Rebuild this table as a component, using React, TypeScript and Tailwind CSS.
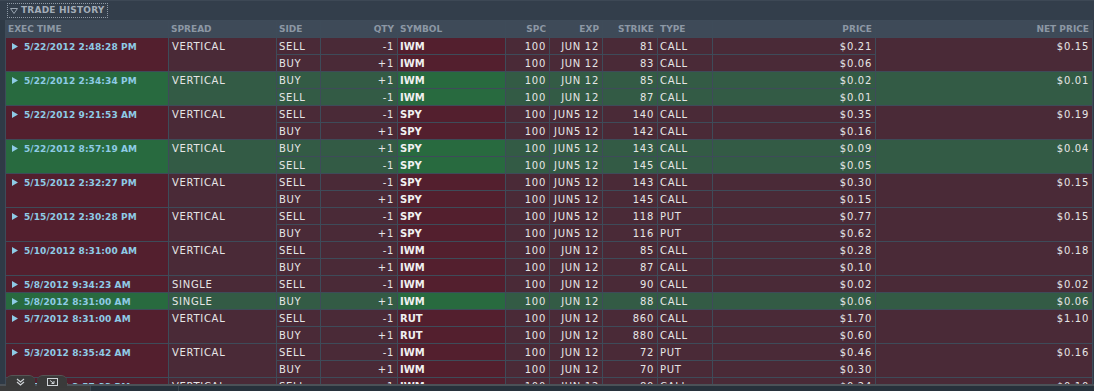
import React from "react";

type Leg = { side: string; qty: string; sym: string; spc: string; exp: string; strike: string; type: string; price: string };
type Group = { time: string; spread: string; c: "r" | "g"; net: string; legs: Leg[] };

const L = (side: string, sym: string, exp: string, strike: string, type: string, price: string): Leg => ({
  side,
  qty: side === "SELL" ? "-1" : "+1",
  sym,
  spc: "100",
  exp,
  strike,
  type,
  price,
});

const groups: Group[] = [
  { time: "5/22/2012 2:48:28 PM", spread: "VERTICAL", c: "r", net: "$0.15", legs: [L("SELL", "IWM", "JUN 12", "81", "CALL", "$0.21"), L("BUY", "IWM", "JUN 12", "83", "CALL", "$0.06")] },
  { time: "5/22/2012 2:34:34 PM", spread: "VERTICAL", c: "g", net: "$0.01", legs: [L("BUY", "IWM", "JUN 12", "85", "CALL", "$0.02"), L("SELL", "IWM", "JUN 12", "87", "CALL", "$0.01")] },
  { time: "5/22/2012 9:21:53 AM", spread: "VERTICAL", c: "r", net: "$0.19", legs: [L("SELL", "SPY", "JUN5 12", "140", "CALL", "$0.35"), L("BUY", "SPY", "JUN5 12", "142", "CALL", "$0.16")] },
  { time: "5/22/2012 8:57:19 AM", spread: "VERTICAL", c: "g", net: "$0.04", legs: [L("BUY", "SPY", "JUN5 12", "143", "CALL", "$0.09"), L("SELL", "SPY", "JUN5 12", "145", "CALL", "$0.05")] },
  { time: "5/15/2012 2:32:27 PM", spread: "VERTICAL", c: "r", net: "$0.15", legs: [L("SELL", "SPY", "JUN5 12", "143", "CALL", "$0.30"), L("BUY", "SPY", "JUN5 12", "145", "CALL", "$0.15")] },
  { time: "5/15/2012 2:30:28 PM", spread: "VERTICAL", c: "r", net: "$0.15", legs: [L("SELL", "SPY", "JUN5 12", "118", "PUT", "$0.77"), L("BUY", "SPY", "JUN5 12", "116", "PUT", "$0.62")] },
  { time: "5/10/2012 8:31:00 AM", spread: "VERTICAL", c: "r", net: "$0.18", legs: [L("SELL", "IWM", "JUN 12", "85", "CALL", "$0.28"), L("BUY", "IWM", "JUN 12", "87", "CALL", "$0.10")] },
  { time: "5/8/2012 9:34:23 AM", spread: "SINGLE", c: "r", net: "$0.02", legs: [L("SELL", "IWM", "JUN 12", "90", "CALL", "$0.02")] },
  { time: "5/8/2012 8:31:00 AM", spread: "SINGLE", c: "g", net: "$0.06", legs: [L("BUY", "IWM", "JUN 12", "88", "CALL", "$0.06")] },
  { time: "5/7/2012 8:31:00 AM", spread: "VERTICAL", c: "r", net: "$1.10", legs: [L("SELL", "RUT", "JUN 12", "860", "CALL", "$1.70"), L("BUY", "RUT", "JUN 12", "880", "CALL", "$0.60")] },
  { time: "5/3/2012 8:35:42 AM", spread: "VERTICAL", c: "r", net: "$0.16", legs: [L("SELL", "IWM", "JUN 12", "72", "PUT", "$0.46"), L("BUY", "IWM", "JUN 12", "70", "PUT", "$0.30")] },
  { time: "5/2/2012 2:57:33 PM", spread: "VERTICAL", c: "r", net: "$0.10", legs: [L("SELL", "IWM", "JUN 12", "80", "CALL", "$0.24"), L("BUY", "IWM", "JUN 12", "82", "CALL", "$0.14")] },
];

const FONT = "font-['DejaVu_Sans',Verdana,sans-serif]";
const TXT = `${FONT} text-[10px] tracking-[0.7px] text-[#e6e6e6] leading-[18px] h-4 whitespace-nowrap`;

const headers: { t: string; r?: boolean }[] = [
  { t: "EXEC TIME" },
  { t: "SPREAD" },
  { t: "SIDE" },
  { t: "QTY", r: true },
  { t: "SYMBOL" },
  { t: "SPC", r: true },
  { t: "EXP", r: true },
  { t: "STRIKE", r: true },
  { t: "TYPE" },
  { t: "PRICE", r: true },
  { t: "NET PRICE", r: true },
];

function Arrow() {
  return (
    <svg width="6" height="7" viewBox="0 0 6 7" className="shrink-0">
      <path d="M0 0 L6 3.5 L0 7 Z" fill="#8ecbe6" />
    </svg>
  );
}

export default function App() {
  const cells: React.ReactNode[] = [];
  groups.forEach((g, gi) => {
    const strong = g.c === "r" ? "bg-[#531f2e]" : "bg-[#286a3f]";
    const soft = g.c === "r" ? "bg-[#4a2a37]" : "bg-[#335b45]";
    const span = g.legs.length === 2 ? "row-span-2" : "";
    g.legs.forEach((l, li) => {
      if (li === 0) {
        cells.push(
          <div key={`${gi}-t`} className={`${strong} ${span} flex items-start`}>
            <div className="flex h-4 items-center gap-[6px] pl-[6px] pt-px">
              <Arrow />
              <span className={`${FONT} text-[9px] font-bold text-[#8ecbe6] tracking-[0.1px] leading-4 whitespace-nowrap`}>{g.time}</span>
            </div>
          </div>
        );
        cells.push(
          <div key={`${gi}-s`} className={`${soft} ${span}`}>
            <div className={`${TXT} pl-[3px]`}>{g.spread}</div>
          </div>
        );
      }
      cells.push(<div key={`${gi}-${li}-a`} className={soft}><div className={`${TXT} pl-[2px]`}>{l.side}</div></div>);
      cells.push(<div key={`${gi}-${li}-b`} className={soft}><div className={`${TXT} text-right pr-[3px]`}>{l.qty}</div></div>);
      cells.push(
        <div key={`${gi}-${li}-c`} className={strong}>
          <div className={`${FONT} text-[10px] font-bold text-[#f0f0f0] leading-[18px] h-4 pl-[2px]`}>{l.sym}</div>
        </div>
      );
      cells.push(<div key={`${gi}-${li}-d`} className={soft}><div className={`${TXT} text-right pr-[3px]`}>{l.spc}</div></div>);
      cells.push(<div key={`${gi}-${li}-e`} className={soft}><div className={`${TXT} text-right pr-[3px]`}>{l.exp}</div></div>);
      cells.push(<div key={`${gi}-${li}-f`} className={soft}><div className={`${TXT} text-right pr-[3px]`}>{l.strike}</div></div>);
      cells.push(<div key={`${gi}-${li}-g`} className={soft}><div className={`${TXT} pl-[2px]`}>{l.type}</div></div>);
      cells.push(<div key={`${gi}-${li}-h`} className={soft}><div className={`${TXT} text-right pr-[3px]`}>{l.price}</div></div>);
      if (li === 0) {
        cells.push(
          <div key={`${gi}-n`} className={`${soft} ${span}`}>
            <div className={`${TXT} text-right pr-[3px]`}>{g.net}</div>
          </div>
        );
      }
    });
  });

  return (
    <div className="relative w-[1094px] h-[391px] overflow-hidden bg-[#2f3a46]">
      {/* title bar */}
      <div className="h-[20px] bg-[#333e4b] border-t border-[#3d4855] flex items-start pl-[7px] pt-[2px]">
        <div className="flex items-center gap-[3px] h-[15px] px-[2px] border border-dotted border-[#8e99a5]">
          <svg width="8" height="6" viewBox="0 0 8 6">
            <path d="M0.5 0.5 L7.5 0.5 L4 5.5 Z" fill="none" stroke="#9aa5b1" strokeWidth="1" />
          </svg>
          <span className={`${FONT} text-[9px] font-bold tracking-[0.2px] text-[#a3adb8] leading-none`}>TRADE HISTORY</span>
        </div>
      </div>

      {/* table */}
      <div className="h-[364px] overflow-hidden pl-[5px]">
        <div className="grid w-[1088px] grid-cols-[162px_107px_43px_76px_107px_43px_52px_54px_54px_162px_216px] auto-rows-[16px] gap-px bg-[#3e4b59] p-px">
          {headers.map((h) => (
            <div key={h.t} className="bg-[#3e4a58]">
              <div className={`${FONT} text-[9px] font-bold text-[#8c97a4] leading-[17px] h-4 whitespace-nowrap ${h.r ? "text-right pr-[3px]" : "pl-[2px]"}`}>
                {h.t}
              </div>
            </div>
          ))}
          {cells}
        </div>
      </div>

      {/* bottom bar */}
      <div className="h-[2px] bg-[#4b5157]" />
      <div className="flex h-[5px]">
        <div className="w-[90px] bg-[#3b3b3b]" />
        <div className="w-[88px] bg-[#27313b] border-l border-[#3c4650]" />
        <div className="flex-1 bg-[#27313b] border-l border-[#3c4650]" />
      </div>

      {/* tabs overlay */}
      <div className="absolute left-[6px] top-[375px] flex gap-[2px]">
        <div className="w-[29px] h-[13px] rounded-t-[6px] bg-[#3a3a3a] border-t border-[#555] flex items-center justify-center">
          <svg width="9" height="8" viewBox="0 0 9 8">
            <path d="M1 1 L4.5 4 L8 1 M1 4 L4.5 7 L8 4" fill="none" stroke="#d0d4d8" strokeWidth="1.2" />
          </svg>
        </div>
        <div className="w-[30px] h-[13px] rounded-t-[6px] bg-[#3a3a3a] border-t border-[#555] flex items-center justify-center">
          <svg width="11" height="8" viewBox="0 0 11 8">
            <rect x="0.5" y="0.5" width="10" height="7" fill="none" stroke="#d0d4d8" strokeWidth="1" />
            <path d="M3 2.5 L7 5.5 M7 3 L7 5.5 L4.5 5.5" fill="none" stroke="#d0d4d8" strokeWidth="1" />
          </svg>
        </div>
      </div>
    </div>
  );
}
